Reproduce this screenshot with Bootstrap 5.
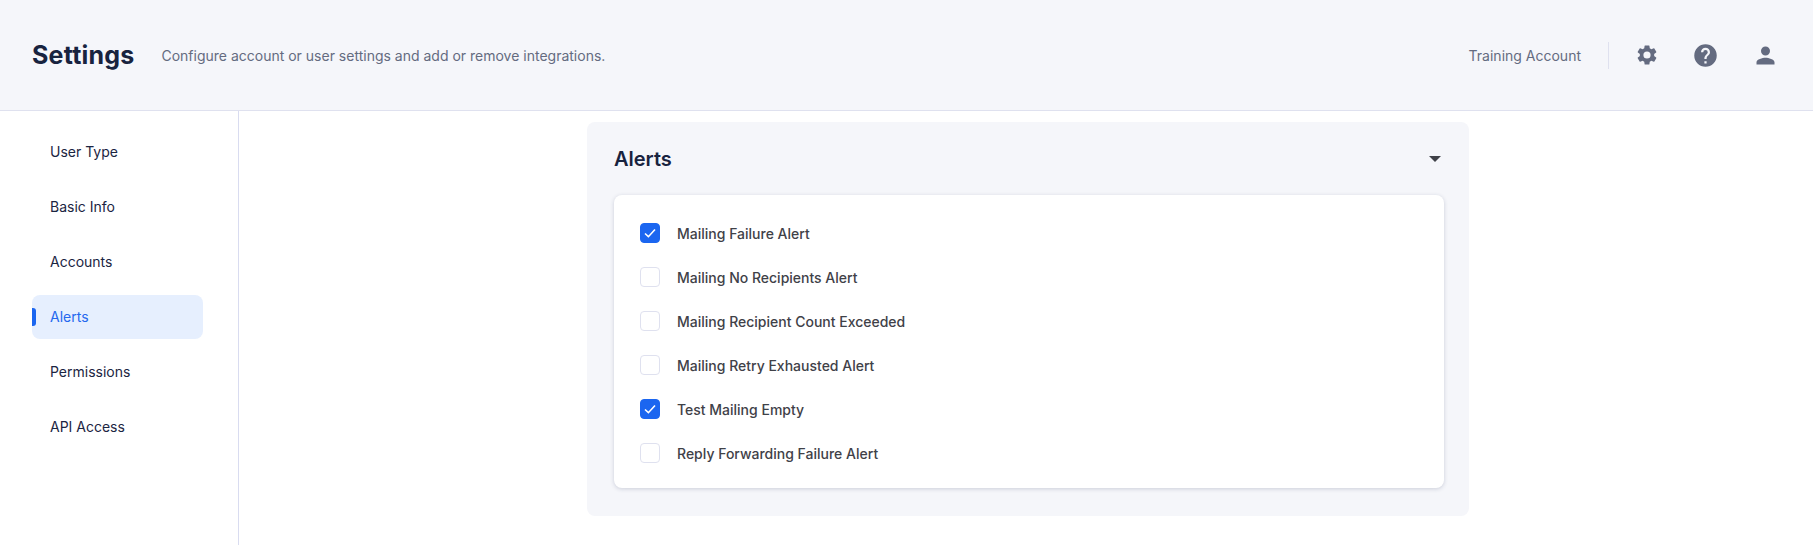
<!DOCTYPE html>
<html lang="en">
<head>
    <meta charset="UTF-8">
    <meta name="viewport" content="width=device-width, initial-scale=1.0">
    <title>Settings</title>
    <link rel="stylesheet" href="https://cdn.jsdelivr.net/npm/bootstrap@5.3.0/dist/css/bootstrap.min.css">
    <style>
        html, body { height: 100%; }
        body { font-family: Inter, "Liberation Sans", sans-serif; font-size: 14px; color: #1b2542; overflow: hidden; }
        .page-head { height: 111px; background: #f5f6fa; border-bottom: 1px solid #dfe1ef; padding: 0 32px; }
        .page-title { font-size: 25px; font-weight: 700; color: #18233f; margin: 0 27px 0 0; line-height: 1; letter-spacing: .2px; }
        .page-desc { font-size: 14px; color: #646b80; }
        .acct-name { font-size: 14px; color: #646b80; padding-right: 27px; margin-right: 26px; border-right: 1px solid #dfe1ef; height: 27px; line-height: 27px; }
        .head-icons { gap: 33px; padding-right: 2px; }
        .head-icons svg { display: block; fill: #646b80; }
        .page-body { height: 434px; }
        .side-nav { width: 239px; flex: none; border-right: 1px solid #d9dcf0; padding: 19px 35px 0 32px; }
        .side-link { display: block; height: 44px; line-height: 44px; padding-left: 18px; margin-bottom: 11px; color: #1b2542; text-decoration: none; border-radius: 8px; position: relative; font-size: 14px; }
        .side-link.is-active { background: #e6effe; color: #2468ee; }
        .side-link.is-active::before { content: ""; position: absolute; left: 0; top: 13px; width: 4px; height: 18px; background: #1b66f0; border-radius: 0 3px 3px 0; }
        .panel-wrap { flex: 1; padding: 11px 0 0 348px; }
        .alert-panel { width: 882px; height: 394px; background: #f5f6fa; border-radius: 8px; padding: 0 27px; }
        .panel-head { height: 73px; }
        .panel-title { font-size: 20px; font-weight: 600; color: #18233f; margin: 0; }
        .caret-down { width: 0; height: 0; border-left: 6px solid transparent; border-right: 6px solid transparent; border-top: 6px solid #3f4148; margin-right: 1px; }
        .alert-card { width: 830px; height: 293px; background: #fff; border-radius: 8px; box-shadow: 0 1px 4px rgba(40, 50, 90, .2); padding: 16px 26px; }
        .check-row { height: 44px; margin: 0; color: #3f4148; font-weight: 500; font-size: 14px; gap: 17px; }
        .check-box { width: 20px; height: 20px; flex: none; border: 1px solid #dfe1ef; border-radius: 4px; background: #fff; }
        .check-box.is-on { background: #1b66f0; border-color: #1b66f0; }
        .check-box svg { display: block; }
    </style>
</head>
<body>
    <!-- Header -->
    <header class="page-head d-flex align-items-center justify-content-between">
        <div class="d-flex align-items-center">
            <h1 class="page-title">Settings</h1>
            <span class="page-desc">Configure account or user settings and add or remove integrations.</span>
        </div>
        <div class="d-flex align-items-center">
            <span class="acct-name">Training Account</span>
            <div class="head-icons d-flex align-items-center">
                <svg width="24" height="24" viewBox="0 0 24 24"><path d="M19.14 12.94c.04-.3.06-.61.06-.94 0-.32-.02-.64-.07-.94l2.03-1.58a.49.49 0 0 0 .12-.61l-1.92-3.32a.49.49 0 0 0-.59-.22l-2.39.96c-.5-.38-1.03-.7-1.62-.94l-.36-2.54a.48.48 0 0 0-.48-.41h-3.84a.47.47 0 0 0-.47.41l-.36 2.54c-.59.24-1.13.57-1.62.94l-2.39-.96a.48.48 0 0 0-.59.22L2.74 8.87a.47.47 0 0 0 .12.61l2.03 1.58c-.05.3-.09.63-.09.94s.02.64.07.94l-2.03 1.58a.49.49 0 0 0-.12.61l1.92 3.32c.12.22.37.29.59.22l2.39-.96c.5.38 1.03.7 1.62.94l.36 2.54c.05.24.24.41.48.41h3.84c.24 0 .44-.17.47-.41l.36-2.54c.59-.24 1.13-.56 1.62-.94l2.39.96c.22.08.47 0 .59-.22l1.92-3.32a.47.47 0 0 0-.12-.61l-2.01-1.58zM12 15.6A3.6 3.6 0 1 1 12 8.4a3.6 3.6 0 0 1 0 7.2z"/></svg>
                <svg width="27" height="27" viewBox="0 0 24 24"><path d="M12 2a10 10 0 1 0 0 20 10 10 0 0 0 0-20zm1 17h-2v-2h2v2zm2.07-7.75-.9.92C13.45 12.9 13 13.5 13 15h-2v-.5c0-1.1.45-2.1 1.17-2.83l1.24-1.26c.37-.36.59-.86.59-1.41a2 2 0 0 0-4 0H8a4 4 0 0 1 8 0c0 .88-.36 1.68-.93 2.25z"/></svg>
                <svg width="27" height="27" viewBox="0 0 24 24"><path d="M12 12a4 4 0 1 0 0-8 4 4 0 0 0 0 8zm0 2c-2.67 0-8 1.34-8 4v2h16v-2c0-2.66-5.33-4-8-4z"/></svg>
            </div>
        </div>
    </header>

    <div class="page-body d-flex">
        <!-- Menu laterale -->
        <nav class="side-nav">
            <a class="side-link" href="#">User Type</a>
            <a class="side-link" href="#">Basic Info</a>
            <a class="side-link" href="#">Accounts</a>
            <a class="side-link is-active" href="#">Alerts</a>
            <a class="side-link" href="#">Permissions</a>
            <a class="side-link" href="#">API Access</a>
        </nav>

        <main class="panel-wrap">
            <section class="alert-panel">
                <div class="panel-head d-flex align-items-center justify-content-between">
                    <h2 class="panel-title">Alerts</h2>
                    <span class="caret-down"></span>
                </div>
                <div class="alert-card" id="alert-list"></div>
            </section>
        </main>
    </div>

    <script src="https://cdn.jsdelivr.net/npm/bootstrap@5.3.0/dist/js/bootstrap.bundle.min.js"></script>
    <script>
        const alertsList = [
            ['Mailing Failure Alert', true],
            ['Mailing No Recipients Alert', false],
            ['Mailing Recipient Count Exceeded', false],
            ['Mailing Retry Exhausted Alert', false],
            ['Test Mailing Empty', true],
            ['Reply Forwarding Failure Alert', false]
        ];
        const tick = '<svg width="18" height="18" viewBox="0 0 18 18"><path d="M4 9.5l3.4 3.2L14 5.5" fill="none" stroke="#fff" stroke-width="1.6"/></svg>';
        document.getElementById('alert-list').innerHTML = alertsList.map(item => `
            <label class="check-row d-flex align-items-center">
                <span class="check-box ${item[1] ? 'is-on' : ''}">${item[1] ? tick : ''}</span>
                <span>${item[0]}</span>
            </label>`).join('');
    </script>
</body>
</html>
